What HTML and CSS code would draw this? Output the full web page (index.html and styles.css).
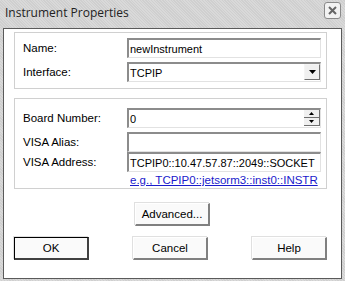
FILE: index.html
```html
<!DOCTYPE html>
<html lang="en">
<head>
  <meta charset="UTF-8">
  <title>Instrument Properties</title>
  <link rel="stylesheet" href="styles.css">
</head>
<body>
  <div class="window">
    <div class="titlebar">
      <span class="title">Instrument Properties</span>
      <span class="close">
        <svg width="11" height="11" viewBox="0 0 11 11"><path d="M2 2 L9 9 M9 2 L2 9" stroke="#666" stroke-width="2"/></svg>
      </span>
    </div>

    <div class="client">
      <!-- General -->
      <div class="group first">
        <div class="row">
          <label>Name:</label>
          <div class="field">newInstrument</div>
        </div>
        <div class="row">
          <label>Interface:</label>
          <div class="field combo">
            <span>TCPIP</span>
            <span class="drop">
              <svg width="7" height="4" viewBox="0 0 7 4"><path d="M0 0 H7 L3.5 4 Z" fill="#000"/></svg>
            </span>
          </div>
        </div>
      </div>

      <!-- TCPIP settings -->
      <div class="group second">
        <div class="row">
          <label>Board Number:</label>
          <div class="field combo">
            <span>0</span>
            <span class="spin">
              <span class="spin-btn"><svg width="5" height="3" viewBox="0 0 5 3"><path d="M0 3 H5 L2.5 0 Z" fill="#000"/></svg></span>
              <span class="spin-btn"><svg width="5" height="3" viewBox="0 0 5 3"><path d="M0 0 H5 L2.5 3 Z" fill="#000"/></svg></span>
            </span>
          </div>
        </div>
        <div class="row tight">
          <label>VISA Alias:</label>
          <div class="field"></div>
        </div>
        <div class="row tight">
          <label>VISA Address:</label>
          <div class="field">TCPIP0::10.47.57.87::2049::SOCKET</div>
        </div>
        <a class="hint" href="#">e.g., TCPIP0::jetsorm3::inst0::INSTR</a>
      </div>

      <div class="advanced">
        <button class="btn">Advanced...</button>
      </div>

      <div class="buttons">
        <button class="btn default">OK</button>
        <button class="btn">Cancel</button>
        <button class="btn">Help</button>
      </div>
    </div>
  </div>
</body>
</html>
```

FILE: styles.css
```css
* {
  margin: 0;
  padding: 0;
  box-sizing: border-box;
}

body {
  font-family: 'Liberation Sans', Arial, sans-serif;
  font-size: 11.5px;
  color: #000;
  background: #d6d6d6;
}

/* Window frame */
.window {
  width: 345px;
  height: 281px;
  background: repeating-linear-gradient(45deg, #d9d9d9 0, #d9d9d9 1px, #cfcfcf 1px, #cfcfcf 2px);
  padding: 0 3px 2px 3px;
  display: flex;
  flex-direction: column;
}

.titlebar {
  height: 28px;
  display: flex;
  align-items: flex-start;
  justify-content: space-between;
}

.title {
  font-family: 'Open Sans', 'Liberation Sans', sans-serif;
  font-size: 12px;
  color: #222;
  margin: 4px 0 0 2px;
}

.close {
  width: 17px;
  height: 17px;
  margin: 2px 1px 0 0;
  border: 1px solid #8a8a8a;
  border-radius: 3px;
  background: #f2f2f2;
  display: flex;
  align-items: center;
  justify-content: center;
}

/* Client area */
.client {
  flex: 1;
  background: #fff;
  border: 1px solid #5a5a5a;
  padding: 3px 14px 0 10px;
}

.group {
  border: 1px solid #d0d0d0;
  box-shadow: inset 1px 1px 0 #fff, 1px 1px 0 #fff;
  padding: 5px 5px 0 8px;
}

.first {
  height: 57px;
}

.second {
  margin-top: 9px;
  height: 91px;
  padding-top: 9px;
}

.row {
  display: flex;
  align-items: center;
  height: 20px;
  margin-bottom: 4px;
}

.row.tight {
  margin-bottom: 0;
}

.row label {
  width: 104px;
}

.field {
  flex: 1;
  height: 20px;
  border-top: 2px solid #8c8c8c;
  border-left: 2px solid #8c8c8c;
  border-right: 1px solid #e2e2e2;
  border-bottom: 1px solid #e2e2e2;
  padding: 1px 0 0 1px;
  font-size: 11px;
  line-height: 16px;
  white-space: nowrap;
  overflow: hidden;
}

.combo {
  display: flex;
  justify-content: space-between;
  align-items: flex-start;
}

.drop {
  width: 16px;
  height: 16px;
  margin-top: -1px;
  border-top: 1px solid #f4f4f4;
  border-left: 1px solid #f4f4f4;
  border-right: 1px solid #707070;
  border-bottom: 1px solid #707070;
  background: #f0f0f0;
  display: flex;
  align-items: center;
  justify-content: center;
}

.spin {
  width: 16px;
  margin-top: -1px;
  display: flex;
  flex-direction: column;
}

.spin-btn {
  height: 8px;
  border-right: 1px solid #707070;
  border-bottom: 1px solid #707070;
  background: #f0f0f0;
  display: flex;
  align-items: center;
  justify-content: center;
}

.hint {
  display: block;
  margin: 2px 0 0 107px;
  font-size: 11.5px;
  color: #1a1acc;
}

/* Buttons */
.btn {
  font-family: 'Liberation Sans', Arial, sans-serif;
  font-size: 11.5px;
  width: 75px;
  height: 23px;
  background: #fafafa;
  border-top: 1px solid #fff;
  border-left: 1px solid #fff;
  border-right: 2px solid #808080;
  border-bottom: 2px solid #808080;
  box-shadow: -1px -1px 0 #e0e0e0;
  color: #000;
}

.btn.default {
  border: 1px solid #000;
  border-right: 2px solid #404040;
  border-bottom: 2px solid #404040;
}

.advanced {
  display: flex;
  justify-content: center;
  margin-top: 14px;
  padding-left: 4px;
}

.buttons {
  display: flex;
  justify-content: space-between;
  margin-top: 11px;
}
```
